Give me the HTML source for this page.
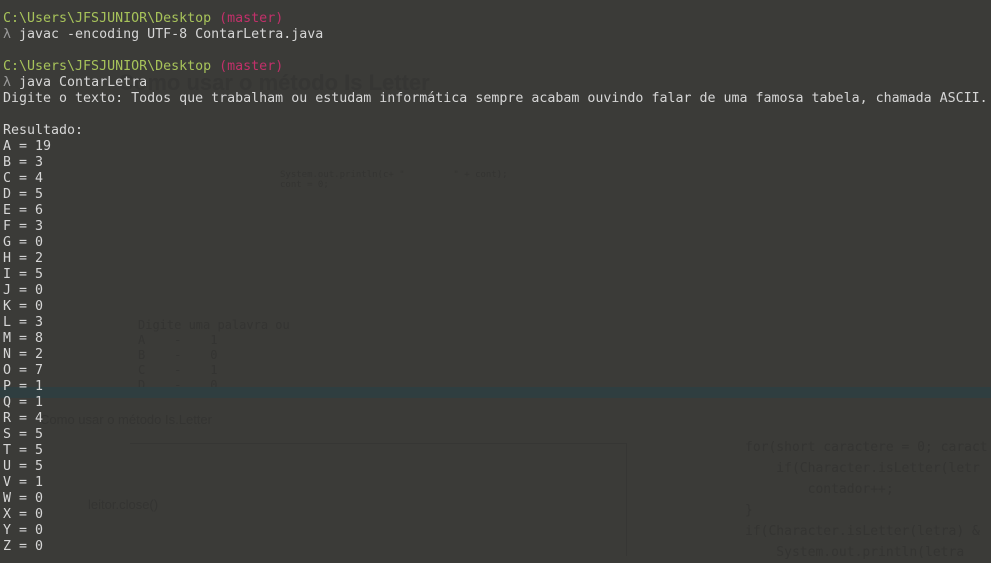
<!DOCTYPE html>
<html><head><meta charset="utf-8">
<style>
html,body{margin:0;padding:0;}
body{width:991px;height:555px;overflow:hidden;background:#3b3b38;position:relative;font-family:"DejaVu Sans Mono","Liberation Mono",monospace;}
.ghost{position:absolute;color:#343432;white-space:pre;}
pre{position:absolute;left:3px;top:11px;margin:0;font-family:"DejaVu Sans Mono","Liberation Mono",monospace;font-size:13.3px;line-height:16px;color:#d6d6d6;}
.g{color:#a7c35a}.p{color:#c2306a}.l{color:#9a9a9a}
.band{position:absolute;left:0;top:387px;width:991px;height:11px;background:#2f3e40;}
</style></head><body>
<div class="ghost" style="left:118px;top:70px;font-family:'Liberation Sans',sans-serif;font-size:22px;font-weight:bold;color:#363634;">Como usar o método Is Letter</div>
<div class="ghost" style="left:280px;top:170px;font-size:9px;">System.out.println(c+ "         " + cont);
cont = 0;</div>
<div class="ghost" style="left:138px;top:318px;font-size:12px;line-height:15px;">Digite uma palavra ou
A    -    1
B    -    0
C    -    1
D    -    0</div>
<div class="band"></div>
<div class="ghost" style="left:40px;top:412px;font-family:'Liberation Sans',sans-serif;font-size:13px;">Como usar o método Is.Letter</div>
<div style="position:absolute;top:443px;height:112px;border:1px solid #363634;border-left:none;border-bottom:none;left:130px;width:496px;"></div>
<div class="ghost" style="left:88px;top:497px;font-family:'Liberation Sans',sans-serif;font-size:13px;">leitor.close()</div>
<div class="ghost" style="left:745px;top:437px;font-size:13px;line-height:21px;">for(short caractere = 0; caract
    if(Character.isLetter(letr
        contador++;
}
if(Character.isLetter(letra) &amp;
    System.out.println(letra</div>
<pre><span class="g">C:\Users\JFSJUNIOR\Desktop</span> <span class="p">(master)</span>
<span class="l">λ</span> javac -encoding UTF-8 ContarLetra.java

<span class="g">C:\Users\JFSJUNIOR\Desktop</span> <span class="p">(master)</span>
<span class="l">λ</span> java ContarLetra
Digite o texto: Todos que trabalham ou estudam informática sempre acabam ouvindo falar de uma famosa tabela, chamada ASCII.

Resultado:
A = 19
B = 3
C = 4
D = 5
E = 6
F = 3
G = 0
H = 2
I = 5
J = 0
K = 0
L = 3
M = 8
N = 2
O = 7
P = 1
Q = 1
R = 4
S = 5
T = 5
U = 5
V = 1
W = 0
X = 0
Y = 0
Z = 0</pre>
</body></html>
